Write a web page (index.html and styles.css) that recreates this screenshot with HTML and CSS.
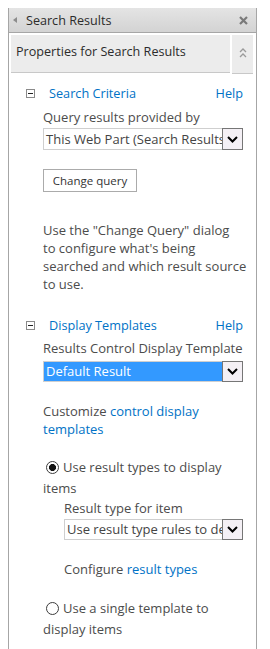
FILE: index.html
```html
<!DOCTYPE html>
<html>
<head>
<meta charset="utf-8">
<link rel="stylesheet" href="styles.css">
</head>
<body>
<div class="panel">
  <div class="titlebar">
    <span class="tri"></span>
    <span class="title">Search Results</span>
    <svg class="close" width="9" height="9" viewBox="0 0 9 9"><path d="M1 1 L8 8 M8 1 L1 8" stroke="#7a7a7a" stroke-width="2.2"/></svg>
  </div>
  <div class="propbar">
    <div class="prop-title">Properties for Search Results</div>
    <div class="prop-toggle">
      <svg width="8" height="11" viewBox="0 0 8 11"><path d="M1 5 L4 2 L7 5 M1 10 L4 7 L7 10" stroke="#9a9a9a" stroke-width="1.3" fill="none"/></svg>
    </div>
  </div>
  <div class="content">
    <div class="sec-head">
      <span class="minus"></span>
      <span class="sec-title">Search Criteria</span>
      <span class="help">Help</span>
    </div>
    <div class="sec-body">
      <div class="label lbl-query">Query results provided by</div>
      <div class="dd dd-query">
        <span class="dd-text">This Web Part (Search Results)</span>
        <span class="dd-btn"><svg width="11" height="7" viewBox="0 0 11 7"><path d="M1 1 L5.5 5.5 L10 1" stroke="#000" stroke-width="2" fill="none"/></svg></span>
      </div>
      <div class="btn">Change query</div>
      <p class="desc">Use the "Change Query" dialog<br>to configure what's being<br>searched and which result source<br>to use.</p>
    </div>

    <div class="sec-head sec-two">
      <span class="minus"></span>
      <span class="sec-title">Display Templates</span>
      <span class="help">Help</span>
    </div>
    <div class="sec-body">
      <div class="label lbl-ctrl">Results Control Display Template</div>
      <div class="dd dd-sel">
        <span class="dd-text">Default Result</span>
        <span class="dd-btn"><svg width="11" height="7" viewBox="0 0 11 7"><path d="M1 1 L5.5 5.5 L10 1" stroke="#000" stroke-width="2" fill="none"/></svg></span>
      </div>
      <p class="customize">Customize <span class="link">control display templates</span></p>
      <p class="radio-line first"><span class="radio on"></span>Use result types to display items</p>
      <div class="sub">
        <div class="label">Result type for item</div>
        <div class="dd dd-type">
          <span class="dd-text">Use result type rules to determine</span>
          <span class="dd-btn"><svg width="11" height="7" viewBox="0 0 11 7"><path d="M1 1 L5.5 5.5 L10 1" stroke="#000" stroke-width="2" fill="none"/></svg></span>
        </div>
        <p class="configure">Configure <span class="link">result types</span></p>
      </div>
      <p class="radio-line second"><span class="radio"></span>Use a single template to display items</p>
    </div>
  </div>
</div>
</body>
</html>
```

FILE: styles.css
```css
body {
  margin: 8px 0 0 8px;
  font-family: "Open Sans", "Noto Sans", sans-serif;
  font-size: 13px;
  color: #4c4c4c;
  background: #fff;
}

.panel {
  width: 247px;
  min-height: 700px;
  border-left: 1px solid #a6a6a6;
  border-right: 1px solid #a6a6a6;
}

.titlebar {
  height: 24px;
  border-bottom: 1px solid #a6a6a6;
  background: linear-gradient(#e4e4e4, #d3d3d3);
  display: flex;
  align-items: center;
  padding: 0 8px 0 4px;
}

.tri {
  width: 0;
  height: 0;
  border-top: 3.5px solid transparent;
  border-bottom: 3.5px solid transparent;
  border-right: 4px solid #8c8c8c;
  margin-right: 9px;
}

.title {
  flex: 1;
  font-size: 12.6px;
  color: #2b2b2b;
}

.propbar {
  display: flex;
  gap: 2px;
  margin: 2px 3px 0 2px;
}

.prop-title {
  flex: 1;
  height: 38px;
  box-sizing: border-box;
  padding: 0 0 4px 5px;
  display: flex;
  align-items: center;
  background: #ececec;
  border-bottom: 1px solid #c8c8c8;
  font-size: 12.6px;
  color: #2b2b2b;
}

.prop-toggle {
  width: 21px;
  height: 39px;
  box-sizing: border-box;
  background: #ececec;
  border-bottom: 1px solid #c8c8c8;
  display: flex;
  justify-content: center;
  padding-top: 12px;
}

.content {
  padding: 10px 13px 0 17px;
}

.sec-head {
  display: flex;
  align-items: center;
  height: 18px;
  font-size: 12.7px;
}

.sec-two {
  margin-top: 23px;
}

.minus {
  width: 7px;
  height: 7px;
  border: 1px solid #8a8a8a;
  position: relative;
  margin-right: 14px;
}

.minus::after {
  content: "";
  position: absolute;
  left: 1px;
  top: 3px;
  width: 5px;
  height: 1px;
  background: #222;
}

.sec-title {
  color: #0072c6;
}

.help {
  margin-left: auto;
  color: #0072c6;
}

.sec-body {
  padding-left: 17px;
}

.label {
  line-height: 18px;
}

.lbl-query {
  margin-top: 6px;
}

.lbl-ctrl {
  margin-top: 5px;
}

.dd {
  display: flex;
  height: 22px;
  box-sizing: border-box;
  border: 1px solid #cfcfcf;
  margin-top: 2px;
}

.dd-text {
  flex: 1;
  overflow: hidden;
  white-space: nowrap;
  padding-left: 2px;
  line-height: 20px;
  color: #444;
}

.dd-btn {
  width: 21px;
  box-sizing: border-box;
  margin: -1px -1px -1px 0;
  border: 1px solid #767676;
  background: #f4f0f5;
  display: flex;
  align-items: center;
  justify-content: center;
}

.dd-sel {
  height: 21px;
  margin-top: 4px;
}

.dd-sel .dd-text {
  background: #3399ff;
  color: #fff;
  line-height: 19px;
}

.btn {
  margin-top: 19px;
  width: 94px;
  height: 23px;
  box-sizing: border-box;
  border: 1px solid #ababab;
  display: flex;
  align-items: center;
  justify-content: center;
  font-size: 11.5px;
  color: #333;
}

.desc {
  margin: 29px -8px 0 0;
  line-height: 18px;
  white-space: nowrap;
}

.customize {
  margin: 20px 0 0;
  line-height: 18px;
}

.link {
  color: #0072c6;
}

.radio-line {
  margin: 0;
  line-height: 21px;
}

.radio-line.first {
  margin-top: 19px;
}

.radio-line.second {
  margin-top: 20px;
}

.radio {
  display: inline-block;
  width: 13px;
  height: 13px;
  box-sizing: border-box;
  border: 1px solid #3c3c3c;
  border-radius: 50%;
  vertical-align: -2px;
  margin: 0 4px 0 3px;
  background: #fff;
}

.radio.on {
  background: radial-gradient(circle, #111 0 3.2px, #fff 3.8px);
}

.sub {
  padding-left: 21px;
}

.dd-type {
  height: 21px;
}

.dd-type .dd-text {
  line-height: 19px;
}

.configure {
  margin: 20px 0 0;
  line-height: 18px;
}
```
